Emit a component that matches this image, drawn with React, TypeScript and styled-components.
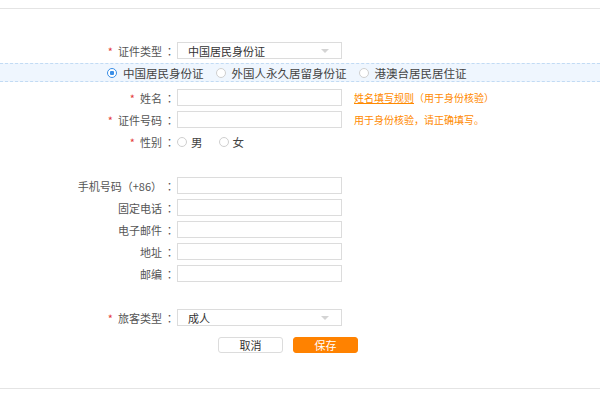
import styled, { createGlobalStyle } from "styled-components"

const GlobalStyle = createGlobalStyle`
  html, body {
    margin: 0;
    padding: 0;
    background: #fff;
  }
  body {
    font-family: "Noto Sans CJK SC", "Noto Sans", sans-serif;
    text-spacing-trim: space-all;
  }
`

interface FieldProps {
  label: string
  required?: boolean
  top: number
  hint?: React.ReactNode
}

const Field: React.FC<React.PropsWithChildren<FieldProps>> = (props) => {
  const { label, required, top, hint, children } = props

  return (
    <Row $top={top}>
      <Label>
        {required && <Star>*</Star>}
        {label}
        <Colon>：</Colon>
      </Label>
      {children}
      {hint && <Hint>{hint}</Hint>}
    </Row>
  )
}

const Select: React.FC<{ value: string }> = ({ value }) => (
  <SelectBox>
    <span>{value}</span>
    <Caret />
  </SelectBox>
)

const App: React.FC = () => {
  return (
    <Page>
      <GlobalStyle />
      <Rule />

      <Field label="证件类型" required top={33}>
        <Select value="中国居民身份证" />
      </Field>

      <Band>
        <RadioItem>
          <Radio $checked />
          中国居民身份证
        </RadioItem>
        <RadioItem>
          <Radio />
          外国人永久居留身份证
        </RadioItem>
        <RadioItem>
          <Radio />
          港澳台居民居住证
        </RadioItem>
      </Band>

      <Field
        label="姓名"
        required
        top={7}
        hint={
          <>
            <u>姓名填写规则</u>（用于身份核验）
          </>
        }
      >
        <Input />
      </Field>

      <Field label="证件号码" required top={5} hint="用于身份核验，请正确填写。">
        <Input />
      </Field>

      <Field label="性别" required top={5}>
        <GenderGroup>
          <RadioItem>
            <Radio />
            男
          </RadioItem>
          <RadioItem>
            <Radio />
            女
          </RadioItem>
        </GenderGroup>
      </Field>

      <Field label="手机号码（+86）" top={27}>
        <Input />
      </Field>
      <Field label="固定电话" top={5}>
        <Input />
      </Field>
      <Field label="电子邮件" top={5}>
        <Input />
      </Field>
      <Field label="地址" top={5}>
        <Input />
      </Field>
      <Field label="邮编" top={5}>
        <Input />
      </Field>

      <Field label="旅客类型" required top={27}>
        <Select value="成人" />
      </Field>

      <Actions>
        <Button>取消</Button>
        <Button $primary>保存</Button>
      </Actions>

      <Rule $top={35} />
    </Page>
  )
}

const Page = styled.div`
  width: 600px;
  height: 400px;
  box-sizing: border-box;
  padding-top: 8px;
  display: flex;
  flex-direction: column;
  overflow: hidden;
`

const Rule = styled.div<{ $top?: number }>`
  height: 1px;
  flex: none;
  background: #e4e4e4;
  margin-top: ${(p) => p.$top ?? 0}px;
`

const Row = styled.div<{ $top: number }>`
  display: flex;
  align-items: center;
  height: 17px;
  flex: none;
  margin-top: ${(p) => p.$top}px;
`

const Label = styled.label`
  width: 177px;
  flex: none;
  box-sizing: border-box;
  padding-right: 2px;
  text-align: right;
  font-size: 11px;
  color: #555;
  white-space: nowrap;
`

const Colon = styled.span`
  font-family: "Noto Sans CJK TC", "Noto Sans CJK SC", sans-serif;
  margin-left: 2px;
`

const Star = styled.span`
  color: #e4393c;
  margin-right: 5px;
`

const Input = styled.input`
  width: 165px;
  height: 17px;
  box-sizing: border-box;
  border: 1px solid #dcdcdc;
  padding: 0 8px;
  margin: 0;
  outline: none;
`

const SelectBox = styled.div`
  width: 165px;
  height: 17px;
  box-sizing: border-box;
  border: 1px solid #dcdcdc;
  padding: 0 10px;
  display: flex;
  align-items: center;
  justify-content: space-between;
  font-size: 11px;
  color: #333;
`

const Caret = styled.span`
  width: 0;
  height: 0;
  border-left: 4px solid transparent;
  border-right: 4px solid transparent;
  border-top: 4px solid #d4d4d4;
  margin-right: 2px;
`

const Hint = styled.span`
  margin-left: 12px;
  font-size: 10px;
  color: #ff8a00;
  white-space: nowrap;
`

const Band = styled.div`
  height: 19px;
  flex: none;
  box-sizing: border-box;
  margin-top: 4px;
  padding-left: 107px;
  display: flex;
  align-items: center;
  gap: 12px;
  background: #eff6fe;
  border-top: 1px dashed #c2dbf4;
  border-bottom: 1px dashed #c2dbf4;
`

const RadioItem = styled.span`
  display: flex;
  align-items: center;
  gap: 6px;
  font-size: 11.5px;
  color: #444;
  white-space: nowrap;
`

const Radio = styled.span<{ $checked?: boolean }>`
  width: 10px;
  height: 10px;
  flex: none;
  box-sizing: border-box;
  border-radius: 50%;
  border: 1px solid ${(p) => (p.$checked ? "#3a8ee6" : "#cfcfcf")};
  background: ${(p) => (p.$checked ? "radial-gradient(circle, #3a8ee6 0 2px, #fff 2.5px)" : "#fff")};
`

const GenderGroup = styled.div`
  display: flex;
  align-items: center;
  gap: 16px;
  ${RadioItem} {
    gap: 4px;
  }
`

const Actions = styled.div`
  display: flex;
  gap: 10px;
  padding-left: 218px;
  margin-top: 11px;
  flex: none;
`

const Button = styled.button<{ $primary?: boolean }>`
  width: 65px;
  height: 16px;
  box-sizing: border-box;
  border-radius: 3px;
  padding: 0;
  font-family: inherit;
  font-size: 11px;
  line-height: 14px;
  cursor: pointer;
  border: 1px solid ${(p) => (p.$primary ? "#ff8200" : "#dcdcdc")};
  background: ${(p) => (p.$primary ? "#ff8200" : "#fff")};
  color: ${(p) => (p.$primary ? "#fff" : "#333")};
`

export default App
